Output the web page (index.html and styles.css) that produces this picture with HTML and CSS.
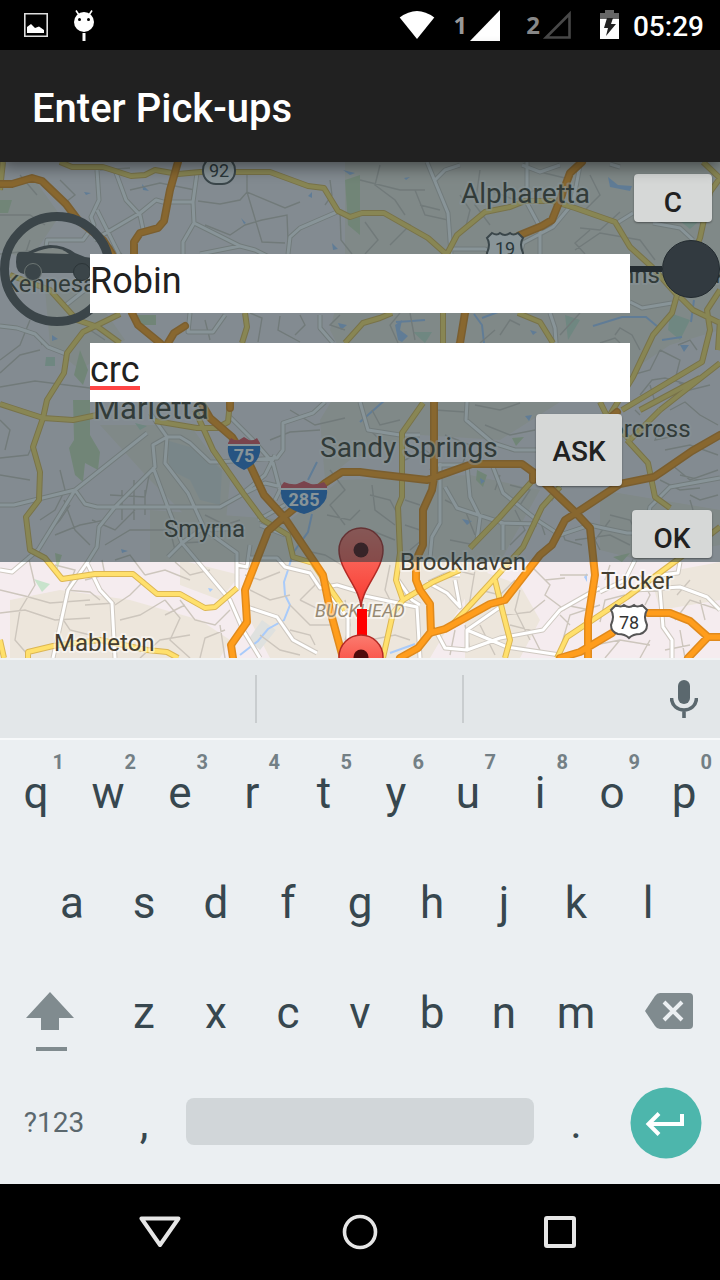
FILE: index.html
```html
<!DOCTYPE html>
<html lang="en">
<head>
<meta charset="utf-8">
<meta name="viewport" content="width=device-width, initial-scale=1">
<title>Enter Pick-ups</title>
<link rel="stylesheet" href="styles.css">
</head>
<body>
<div class="status">
  <svg class="status-picture" width="24" height="24" viewBox="0 0 24 24"><path d="M.8.8H23.2V23.2H.8Z" fill="none" stroke="#dedede" stroke-width="1.6"/><path d="M3 20V14L7 11 11 15 15 13.500 20 17V20Z" fill="#fff"/></svg>
  <svg width="20" height="31" viewBox="0 0 20 31"><circle cx="10" cy="12" r="10" fill="#fff"/><path d="M2 .5 5 5M18 .5 15 5" stroke="#fff" stroke-width="1.6"/><path d="M10 23V31" stroke="#fff" stroke-width="3"/><circle cx="5.500" cy="9.500" r="1.500"/><circle cx="14.500" cy="9.500" r="1.500"/></svg>
  <div class="status-right">
    <svg class="wifi" width="36" height="30" viewBox="0 0 36 30"><path d="M.7 7.500Q18-5.500 35.300 7.500L18 29Z" fill="#fff"/></svg>
    <span class="sim">1<svg width="31" height="31" viewBox="0 0 31 31"><path d="M31 0V31H1Z" fill="#fff"/></svg></span>
    <span class="sim sim-off">2<svg width="30" height="30" viewBox="0 0 30 30"><path d="M27.500 4V27.500H4Z" fill="none" stroke="#484848" stroke-width="2.600"/></svg></span>
    <svg class="battery" width="19" height="30" viewBox="0 0 19 30"><path d="M0 9V3H5V0H14V3H19V9Z" fill="#666"/><path d="M0 9H19V29H0Z" fill="#fff"/><path d="M7 8H13L11 14H16L6 26 8 18H4Z" fill="#222"/></svg>
    <time class="clock">05:29</time>
  </div>
</div>
<header class="bar"><h1>Enter Pick-ups</h1></header>
<main class="stage">
<svg class="map" viewBox="0 162 720 496" preserveAspectRatio="xMidYMin slice" role="img" aria-label="Map of Atlanta suburbs">
  <defs>
  <g id="minor"><path d="M97 170 99 200 91 217 94 225 83 240H47L45 254M115 170 126 200 140 215 143 229M94 240 140 213 156 200 163 202 193 202 197 173M193 202 194 223 183 242V254M194 223 240 246 255 250 275 260M288 254 290 237 300 228 337 212M200 254 240 246M190 313 188 332H213L225 315M0 326 17 328 35 334 48 347 66 354M66 305 85 290M320 315V328L333 343M97 210 112 240 119 254"/>
  <path d="M427 162 448 213 451 254M435 180 445 170 460 165M527 162V203L540 227V254M580 165 573 203 553 227 523 243 520 254M450 249 485 249 495 254M617 223 633 213M653 223 680 228 693 240M550 313 555 328 556 343M630 302 642 308 672 303M610 164 620 167M522 165 540 172 560 165"/>
  <path d="M0 505 14 505 75 490 85 504 97 507H220L245 493 265 483 282 487M147 433 75 490 38 550 12 572 0 570M167 437 153 445 155 467 115 507 99 527 97 547 87 563 68 590 53 658M87 563 100 590 112 603 115 658M153 467 170 513 182 543 230 600 243 630 260 658M150 413 167 437 165 463 188 493 205 530 237 553V590M167 437H180L190 443 210 462H217L277 458 283 450V423L313 413 325 402M230 417 253 440 273 463 280 490 275 500M182 543 200 530 245 528M182 543 168 557M243 493 265 475 275 455M250 558 277 558 285 567 310 573 320 588 337 585 360 592M237 565 247 567 250 545M247 607 277 617 293 640 317 653M258 520 285 505M260 525 285 535M330 595 348 618V650"/>
  <path d="M467 402 466 420 493 443 515 450H540M440 463V523L432 537 430 558M435 465H470L485 463M467 465 470 497 480 517 477 540M445 487 457 508 503 523V550M493 467 503 493 537 520 560 535 590 525 603 528 627 533H635M500 523 537 524M720 478 670 487 650 507 645 530M360 595 417 607 420 658M427 582 447 593 460 607 455 580M398 580 412 600 420 605M430 582 445 575 460 575M437 633 445 648 467 650 500 638 543 630 560 610 590 593 600 588M467 630 507 647 560 655M467 650V630L500 607M600 592 625 580 635 560M635 590 680 587 707 597 720 610M660 590 663 627 672 640V658M680 562 678 573 660 575M360 402 368 430 400 435M402 435 420 435M560 485 550 500"/></g>
  <g id="major"><path d="M60 162 72 167H103L131 176 145 175 155 170 178 174 200 172H270L308 186 324 188 338 211 350 217 362 213H384L428 238 446 254M3 162 0 190M447 254 457 235 485 212 510 207 525 201H552L575 208 615 222 630 247 652 267 677 295M703 162 720 178 710 192 700 238 677 295 672 313 653 335 633 377 608 418M680 297 693 310 720 323M720 290 707 310 710 330 702 362 622 410M720 363 660 410M720 320 718 350M700 378 640 410"/>
  <path d="M10 275 50 290 77 320 98 327 120 343M120 314 83 332 67 353 64 373 47 400 43 418 33 447 40 472 39 500 26 517 30 550 45 558 62 579 95 574H133L157 594H180L205 608 215 607 237 588M245 313 247 327 242 343M0 404 43 418 73 420 97 415M155 421 197 428H217L228 422 230 402M345 343 363 323 380 318 392 313M443 313V343M518 313 540 322 553 343M195 410 213 450 243 493 263 520 288 535 293 557 313 563 333 593 345 610M28 658V652L53 646 100 640 147 650 167 652 178 658M0 640 4 658"/>
  <path d="M423 403 402 433V497L398 507 400 553 396 580 403 600 433 582 460 570M533 480 500 517 470 548M560 487 542 507 523 547 493 580 450 627M495 580 503 613 510 640 505 658M403 600 393 613 383 658M720 527 677 560 627 597 567 637 557 658M627 440 648 463 655 497 670 508M600 402 608 418 630 440M660 410 630 440"/></g>
  <g id="highway"><path d="M0 184H12L32 178 42 181 66 204 78 220 103 240 112 254 125 285 132 313 138 325 160 343 185 375 210 418 232 437 250 465 264 495 284 517 323 575 330 610 343 658M178 162 170 190 164 221 158 228 140 233 134 242V254L128 300M185 326 174 333 168 343M230 402V408M582 162 570 173 560 200 552 220 542 226 520 235 490 254 465 313 460 343 434 402V478L432 490 423 510V545L416 560V580L420 590 430 604 431 633M720 435 692 451 663 471 654 477 620 484 576 513 565 520 552 545 540 555 505 600 490 604 445 629 430 633 418 648 400 658M233 658 231 645 247 622 245 590 268 531 284 517 325 483 342 472H360L375 474 427 480 472 464H522L533 472 575 512 590 528 595 575 588 620V658M610 418 617 412M533 472V480M648 613H670L690 621 708 637H720M708 637 688 658M612 633 580 652 560 658"/></g>
  <linearGradient id="pin" x2="0" y2="1"><stop stop-color="#fb7c70"/><stop offset="1" stop-color="#f8392f"/></linearGradient>
  </defs>
  <rect y="162" width="720" height="496" fill="#f5ecef"/>
  <g fill="#ede6dc">
    <path d="M345 162H720V330L670 345 640 365 605 402 560 402 500 440 420 435 350 460 325 480 320 420 350 370 330 330 345 270Z"/>
    <path d="M0 185 35 180 60 215 30 260 0 250ZM100 425H190L230 480 225 530 190 520 150 480ZM150 510 290 520 340 480 470 475 540 490 500 562H150ZM600 490 720 510V545L640 560 600 550Z"/>
    <path d="M10 600 60 590 130 600 200 620 230 640 220 658H10ZM180 560 240 575 220 600 180 585ZM250 560H500L470 590 430 658H270L250 620ZM465 565 520 585 540 620 520 658H465ZM650 575 720 562V600L660 610Z"/>
    <path d="M45 290 90 290 125 340 80 370 50 345Z"/>
  </g>
  <g fill="#dfe1df"><path d="M166 440 200 450 222 470 220 505 200 500 190 480 170 470ZM262 620 276 630 260 650 248 640Z"/></g>
  <g fill="#ccdfb8">
    <path d="M73 400H90V435L100 452 98 470 85 463 83 482 75 475 69 448 74 440ZM136 315H156V325H142ZM0 200H12L8 213H0ZM477 470 487 475 483 487 476 480ZM512 438 524 437 516 446ZM55 553 62 555 57 570ZM613 557 630 553 622 562Z"/>
    <path d="M345 180 360 175V235L348 225ZM80 350 88 370 83 385 74 375Z"/>
  </g>
  <g fill="#c8e3cc"><path d="M46 357H55V366H45ZM413 332H432L425 343ZM34 579 50 584 42 592ZM670 313 690 320 680 340 668 330ZM565 315 580 320 568 340ZM680 221 698 222 690 229ZM135 423 147 426 140 430Z"/></g>
  <g fill="#a9cbfa"><path d="M608 177 618 185 632 186 630 191 610 187ZM84 192 91 193 86 195ZM142 184 149 191 143 190ZM241 218 246 223 244 224ZM332 243 338 249 333 250ZM308 196 312 192V198ZM343 170 355 173 350 175ZM404 178 410 177 406 180ZM338 323 347 325 341 330ZM52 335 58 339 52 341ZM530 330 537 332 533 335ZM680 345 689 345 684 352ZM462 519 472 521 467 525ZM525 416 532 415 529 421ZM480 478 485 481 481 484ZM121 549 128 551 122 553ZM208 588 213 589 210 592ZM587 573V582L584 577ZM395 325 402 320 400 330 408 336 402 342 398 340Z"/></g>
  <g class="water"><path d="M396 322 412 321 425 320M474 314 482 325 484 343M482 318 498 312M593 326 622 317 646 317 658 327M662 340 682 337M694 300 691 322M360 422 385 400M317 462 308 480M312 514 308 532 293 553 288 570 284 582 285 595 290 605 284 620 268 629 258 641 240 655M390 653 415 644"/></g>

  <g class="lanes"><path d="M0 215H30L45 225M37 195 20 175M60 180 75 195 62 205M100 170 130 168M198 201 220 204 240 200 247 192 285 208 300 202M247 170V192M247 192 262 242 285 243M262 220 287 215 288 240M195 190 160 183 130 190M205 225 230 235 245 225 262 220M330 180 332 195 325 205M340 212 341 240 352 254M30 240 25 255M0 254 30 251M110 245 122 254M360 180 400 190 425 190M380 165 375 185 395 200 405 215M365 222 378 240 365 254M395 218 410 225 390 245M480 170 475 205 490 225M490 190 515 200 535 190M540 172 565 178M590 175 600 195 585 210M620 212 600 230 580 228M575 250 600 233 640 240 655 260M585 254 575 243 590 230M460 195 470 210 465 230M420 205 440 210M415 190 425 215 448 220M690 185 680 200 700 215"/>
  <path d="M205 320 210 340M250 313 262 318 258 342M280 316 278 330 300 342M300 315 305 325 295 335M340 315 330 325 345 330M0 360 20 345 30 320M0 373 20 355 40 350M0 387 35 381 90 388M38 335 42 345M90 330 105 340M400 313 390 325 398 343M500 335 510 320 520 325M480 343 495 330M410 313 415 340M580 313 560 335M615 335 620 328 632 335 640 350M632 375 650 370 660 350M640 395 652 380 665 378 690 385M650 385 655 402M660 350 680 360 675 380 690 390 710 385M678 345 690 340 697 350M600 343 615 338 620 343M0 458 28 455 35 440M0 420 10 430 5 450M0 475 30 480M60 470 65 490 55 510 40 520M42 540 60 520 70 505M55 535 80 525 105 520M64 500 75 530 90 545M92 520 115 530 135 510M110 495 145 497 150 470M122 490V520M134 480V520M145 490V515M105 545 130 530 170 530 175 550M170 555 182 543 200 542M205 515 225 525 240 520M270 440 290 432 320 430M290 410 315 425 345 418M330 470 345 490 330 505 345 525M327 515 350 520 360 510M302 550 325 555 350 570M370 430 390 450M372 410 380 425 400 420M370 495 390 500 398 515M372 485 375 510 395 525M370 530 395 540M405 500 420 505M405 460 425 450 432 455M405 525 420 530M410 550 422 540M435 410 465 412M445 435 470 445 462 465M440 450 430 470M475 405 500 410 520 403M485 425 510 435 535 430M500 475 495 490M510 485 530 490 520 505M445 500 465 510 475 535M450 540 475 545M515 510 525 530 510 545M540 520 545 535M560 525 565 540 582 545M575 540 610 535 630 545M600 550 595 540 610 520M610 515 630 520 640 540M635 410 640 415M670 410 685 402 700 415 718 425M640 425 660 425 655 440 680 435M665 450 690 445 718 455M672 465 690 480 718 470M680 475 700 480M660 480 680 490 700 488M690 495 700 500 718 495M690 500 693 510"/>
  <path d="M0 590 25 596 50 603 90 600M0 613 25 610 55 620 90 618M28 555 35 585 20 610 15 640 28 655M55 565 75 570 65 595M60 615 70 630 90 635M85 605 115 603M65 590 90 592 100 600M102 560 105 575 85 580M115 560 130 555 145 575M145 575 165 570 190 580M145 580 130 595 115 605M120 620 140 615 165 600M165 600 180 618 170 640 190 658M180 600 195 620 215 625 230 610M140 658 160 640 190 635M200 658 205 638 225 630M220 625 225 658M165 615 185 605M175 562 190 575 210 570M245 575 260 580 280 572M250 590 270 600 290 595M300 600 320 610 330 600M290 605 310 625 330 625M290 630 310 635 315 645M260 635 280 650 300 655M310 570 315 585 300 600M345 600 350 625 345 640M390 565 385 590 390 600M370 640 395 635 410 640M440 580 455 570 475 575M475 570 470 600 465 620M480 590 500 595 515 580M505 615 530 612 545 600M520 590 515 610 530 640M530 565 550 585 545 595 565 610M560 575 588 575M545 580 565 578M600 605 570 615 560 650M565 605 590 610M570 625 560 615M600 622 605 600 625 595M540 650 530 630 510 625M455 630 450 655M465 625 470 650M480 625 495 655M595 645 620 640 650 645M605 658 620 640M650 640 640 658M665 650 690 645M675 620 690 600 720 610M680 630 685 658M700 600 705 620M610 565 605 580M640 575 650 595 645 605M677 595 690 580"/></g>

  <use href="#minor" class="minor-edge"/><use href="#minor" class="minor-fill"/>
  <use href="#major" class="major-edge"/><use href="#major" class="major-fill"/>
  <use href="#highway" class="highway-edge"/><use href="#highway" class="highway-fill"/>

  <g class="shield">
    <rect x="203" y="157" width="32" height="27" rx="13" fill="#fff" stroke="#555" stroke-width="2"/><text x="219" y="177">92</text>
    <path d="M-13-17Q-8-14-5-17 0-13 5-17 8-14 13-17L18-12Q14-6 18 3 18 10 11 12 4 12 0 16-4 12-11 12-18 10-18 3-14-6-18-12Z" transform="translate(505 250)" fill="#fff" stroke="#555" stroke-width="2"/><text x="505" y="255">19</text>
    <path d="M616 605Q621 608 624 605 629 609 634 605 637 608 642 605L647 610Q643 616 647 625 647 632 640 634 633 634 629 638 625 634 618 634 611 632 611 625 615 616 611 610Z" fill="#fff" stroke="#555" stroke-width="2"/><text x="629" y="629">78</text>
    <path d="M228 445V443L231 438Q235 441 239 440L244 437 249 440Q253 441 257 438L260 443V445Z" fill="#e0525c"/><path d="M228 444H260V446H228Z" fill="#fff"/><path d="M228 446H260Q262 462 244 470 226 462 228 446Z" fill="#2b73cf"/>
    <path d="M281 489V486L284 482Q291 485 297 484L304 481 311 484Q317 485 324 482L327 486V489Z" fill="#e0525c"/><path d="M281 488H327V490H281Z" fill="#fff"/><path d="M281 490H327Q329 507 304 514 279 507 281 490Z" fill="#2b73cf"/>
    <g class="interstate"><text x="244" y="462">75</text><text x="304" y="506">285</text></g>
  </g>
  <g class="places">
    <g class="large"><text x="461" y="203">Alpharetta</text><text class="city" x="93" y="419">Marietta</text><text x="320" y="457">Sandy Springs</text></g>
    <text x="4" y="292">Kennesaw</text><text x="594" y="283">Johns Creek</text><text x="593" y="437">Norcross</text><text x="164" y="537">Smyrna</text><text x="400" y="570">Brookhaven</text><text x="601" y="589">Tucker</text><text x="54" y="651">Mableton</text>
    <text class="district" x="315" y="617">BUCKHEAD</text>
  </g>
  <path d="M357 609H367V636H357Z" fill="red"/>
  <g fill="url(#pin)" stroke="#b32a25" stroke-width="1.500">
    <path d="M361 607C360 588 339 570 339 550A22 22 0 0 1 383 550C383 570 362 588 361 607Z"/><circle cx="361" cy="657" r="22"/>
  </g>
  <circle cx="361" cy="550" r="7.500" fill="#500b0b"/><circle cx="361" cy="657" r="7.500" fill="#500b0b"/>
</svg>
<form class="panel">
  <div class="track" aria-hidden="true">
    <svg width="114" height="114" viewBox="0 0 114 114"><circle cx="57" cy="57" r="52.500" fill="none" stroke="#3b4549" stroke-width="9"/><path d="M16 50Q16 40 20 40L28 40Q39 34 50 33 64 33 75 41L85 45 99 47V61H90A9 9 0 0 0 74 61H41A9 9 0 0 0 24 62Q16 61 16 50Z" fill="#3b4549"/><path d="M33 41Q45 36 53 36 62 36 69 42Z" fill="#808886"/><circle cx="33" cy="60" r="8.500" fill="#3b4549" stroke="#6c7573"/><circle cx="82" cy="60" r="8.500" fill="#3b4549" stroke="#2c3538"/></svg>
    <span class="rail"></span><span class="knob"></span>
  </div>
  <button type="button" class="btn low clear">C</button>
  <input class="field" type="text" value="Robin" aria-label="Name" spellcheck="false">
  <input class="field misspelt" type="text" value="crc" aria-label="Pick-up place" spellcheck="false">
  <button type="button" class="btn ask">ASK</button>
  <button type="submit" class="btn low ok">OK</button>
</form>
</main>
<section class="keyboard" aria-label="Keyboard">
  <div class="suggest"><span></span><span></span><button type="button" class="mic" aria-label="Voice input"><svg width="28" height="38" viewBox="0 0 28 38"><rect x="8" width="12" height="24" rx="6" fill="#5b686e"/><path d="M1.500 18C2 34 26 34 26.500 18M14 29V38" fill="none" stroke="#5b686e" stroke-width="3.600"/></svg></button></div>
  <div class="keys">
    <div class="row">
      <button type="button">q<small>1</small></button><button type="button">w<small>2</small></button><button type="button">e<small>3</small></button><button type="button">r<small>4</small></button><button type="button">t<small>5</small></button><button type="button">y<small>6</small></button><button type="button">u<small>7</small></button><button type="button">i<small>8</small></button><button type="button">o<small>9</small></button><button type="button">p<small>0</small></button>
    </div>
    <div class="row inset">
      <button type="button">a</button><button type="button">s</button><button type="button">d</button><button type="button">f</button><button type="button">g</button><button type="button">h</button><button type="button">j</button><button type="button">k</button><button type="button">l</button>
    </div>
    <div class="row wide-ends">
      <button type="button" class="shift" aria-label="Shift"><svg width="48" height="60" viewBox="0 0 48 60"><path d="M24 0 48 26H33V38H15V26H0ZM10 55H41V59H10Z" fill="#808b8f"/></svg></button><button type="button">z</button><button type="button">x</button><button type="button">c</button><button type="button">v</button><button type="button">b</button><button type="button">n</button><button type="button">m</button><button type="button" class="delete" aria-label="Delete"><svg width="48" height="36" viewBox="0 0 48 36"><path d="M15 0H44Q48 0 48 4V32Q48 36 44 36H15Q12 36 10 33L0 18 10 3Q12 0 15 0Z" fill="#808b8f"/><path d="M19 9 37 27M37 9 19 27" stroke="#ebeff2" stroke-width="4"/></svg></button>
    </div>
    <div class="row bottom">
      <button type="button" class="symbols">?123</button><button type="button">,</button><button type="button" class="space" aria-label="Space"><span></span></button><button type="button">.</button><button type="button" aria-label="Enter"><svg width="72" height="72" viewBox="0 0 72 72"><circle cx="36" cy="36" r="35.500" fill="#4db6ac"/><path d="M52 27V37H18M29 26.500 18.500 37 29 47.500" fill="none" stroke="#fff" stroke-width="4"/></svg></button>
    </div>
  </div>
</section>
<nav class="nav" aria-label="System">
  <button type="button" aria-label="Back"><svg width="42" height="32" viewBox="0 0 42 32"><path d="M2.500 2.500H39.500L21 29Z" fill="none" stroke="#e6e6e6" stroke-width="4" stroke-linejoin="round"/></svg></button>
  <button type="button" aria-label="Home"><svg width="36" height="36" viewBox="0 0 36 36"><circle cx="18" cy="18" r="15.500" fill="none" stroke="#e6e6e6" stroke-width="3.600"/></svg></button>
  <button type="button" aria-label="Recent apps"><svg width="32" height="32" viewBox="0 0 32 32"><rect x="2" y="2" width="28" height="28" rx="1" fill="none" stroke="#e6e6e6" stroke-width="4"/></svg></button>
</nav>
</body>
</html>
```
FILE: styles.css
```css
* { box-sizing: border-box; }
body {
  margin: 0;
  min-height: 100vh;
  display: flex;
  flex-direction: column;
  background: #000;
  font-family: Roboto, "Liberation Sans", sans-serif;
}
button {
  margin: 0;
  padding: 0;
  border: 0;
  background: none;
  font: inherit;
  color: inherit;
}
svg { display: block; flex: none; }

.status {
  height: 50px;
  padding: 0 16px 0 24px;
  display: flex;
  align-items: center;
  color: #fff;
}
.status-picture { margin-right: 26px; }
.status-right { margin-left: auto; display: flex; align-items: center; }
.wifi { margin-right: 18px; }
.sim {
  display: flex;
  align-items: center;
  gap: 2px;
  margin-right: 26px;
  color: #999;
  font: bold 24px/32px "Noto Sans", sans-serif;
}
.sim-off { margin-right: 28px; color: #888; }
.battery { margin-right: 14px; }
.clock { font-size: 28px; font-weight: 500; line-height: 32px; padding-top: 4px; }

.bar {
  height: 112px;
  padding: 6px 32px 0;
  display: flex;
  align-items: center;
  background: #212121;
  color: #fff;
  position: relative;
  z-index: 1;
  box-shadow: 0 4px 16px rgba(0, 0, 0, .5);
}
.bar h1 { margin: 0; font-size: 40px; font-weight: 500; line-height: 48px; }

.stage { position: relative; flex: 1; min-height: 496px; overflow: hidden; }
.map { position: absolute; inset: 0; width: 100%; height: 100%; }
.water { fill: none; stroke: #a9cbfa; stroke-width: 2; }
.lanes { fill: none; stroke: #cdc6bd; stroke-width: 1.4; }
.map use { fill: none; stroke-linejoin: round; }
.minor-edge { stroke: #cfc9c1; stroke-width: 5; }
.minor-fill { stroke: #fff; stroke-width: 3; }
.major-edge { stroke: #dcb653; stroke-width: 6; }
.major-fill { stroke: #ffe06c; stroke-width: 4; }
.highway-edge { stroke: #e08a1c; stroke-width: 8; stroke-linecap: round; }
.highway-fill { stroke: #ff9d1c; stroke-width: 5; stroke-linecap: round; }
.shield { font-size: 18px; text-anchor: middle; fill: #333; }
.interstate { font-weight: bold; fill: #fff; }
.places {
  font-size: 24px;
  fill: #443e30;
  stroke: rgba(255, 255, 255, .5);
  stroke-width: 4;
  stroke-linejoin: round;
  paint-order: stroke;
}
.large { font-size: 28px; }
.city { font-size: 31px; }
.places .district { font-size: 18px; font-style: italic; fill: #978a74; }

.panel {
  position: relative;
  display: flex;
  flex-direction: column;
  align-items: flex-end;
  padding: 12px 8px 4px;
  background: rgba(35, 58, 64, .54);
}
.track {
  position: absolute;
  top: 50px;
  left: 0;
  right: 0;
  display: flex;
  align-items: center;
}
.rail { flex: 1; height: 6px; margin-left: 400px; background: #232b30; }
.knob { width: 58px; height: 58px; border-radius: 50%; background: #323a40; border: 1px solid #232b30; }
.btn {
  position: relative;
  height: 48px;
  border-radius: 4px;
  background: #d6d8d7;
  box-shadow: 0 1px 2px rgba(0, 0, 0, .4);
  color: #212121;
  font-size: 28px;
  font-weight: 500;
  line-height: 32px;
}
.low { padding-top: 10px; }
.clear { width: 78px; margin-bottom: 32px; }
.ask { width: 86px; height: 72px; margin: 12px 90px 24px 0; padding-top: 4px; }
.ok { width: 80px; }
.field {
  position: relative;
  align-self: stretch;
  height: 59px;
  margin: 0 82px;
  padding: 0 0 6px;
  border: 0;
  border-radius: 0;
  background: #fff;
  color: #212121;
  font: 36px Roboto, sans-serif;
}
.misspelt {
  margin-top: 30px;
  background: linear-gradient(#ff4444, #ff4444) 0 43px / 50px 4px no-repeat #fff;
}

.keyboard { background: #ebeff2; color: #37474f; }
.suggest {
  height: 80px;
  display: grid;
  grid-template-columns: 257fr 207fr 256fr;
  align-items: center;
  background: #e3e7e9;
  border-top: 2px solid #f1f3f4;
}
.suggest span { height: 48px; border-right: 2px solid #c9cdcf; }
.mic { justify-self: end; margin-right: 22px; }
.keys { padding-bottom: 6px; box-shadow: inset 0 2px #f7f9fa; }
.row { height: 110px; display: grid; grid-template-columns: repeat(10, 1fr); font-size: 44px; line-height: 52px; }
.row button { position: relative; display: flex; align-items: center; justify-content: center; }
.row small {
  position: absolute;
  top: 12px;
  right: 8px;
  color: #737f85;
  font-size: 20px;
  font-weight: bold;
  line-height: 24px;
}
.inset { grid-template-columns: repeat(9, 1fr); padding: 0 5%; }
.wide-ends { grid-template-columns: 3fr repeat(7, 2fr) 3fr; }
.bottom { grid-template-columns: 3fr 2fr 10fr 2fr 3fr; }
.row .shift { padding: 18px 8px 0 0; }
.row .delete { padding: 0 0 4px 6px; }
.row .symbols { font-size: 28px; color: #5b686e; }
.row .space { padding: 0 6px 4px; }
.space span { flex: 1; height: 47px; border-radius: 8px; background: #d1d6d9; }

.nav {
  height: 96px;
  padding: 0 60px;
  display: grid;
  grid-template-columns: repeat(3, 1fr);
  background: #000;
}
.nav button { display: flex; align-items: center; justify-content: center; }
```
